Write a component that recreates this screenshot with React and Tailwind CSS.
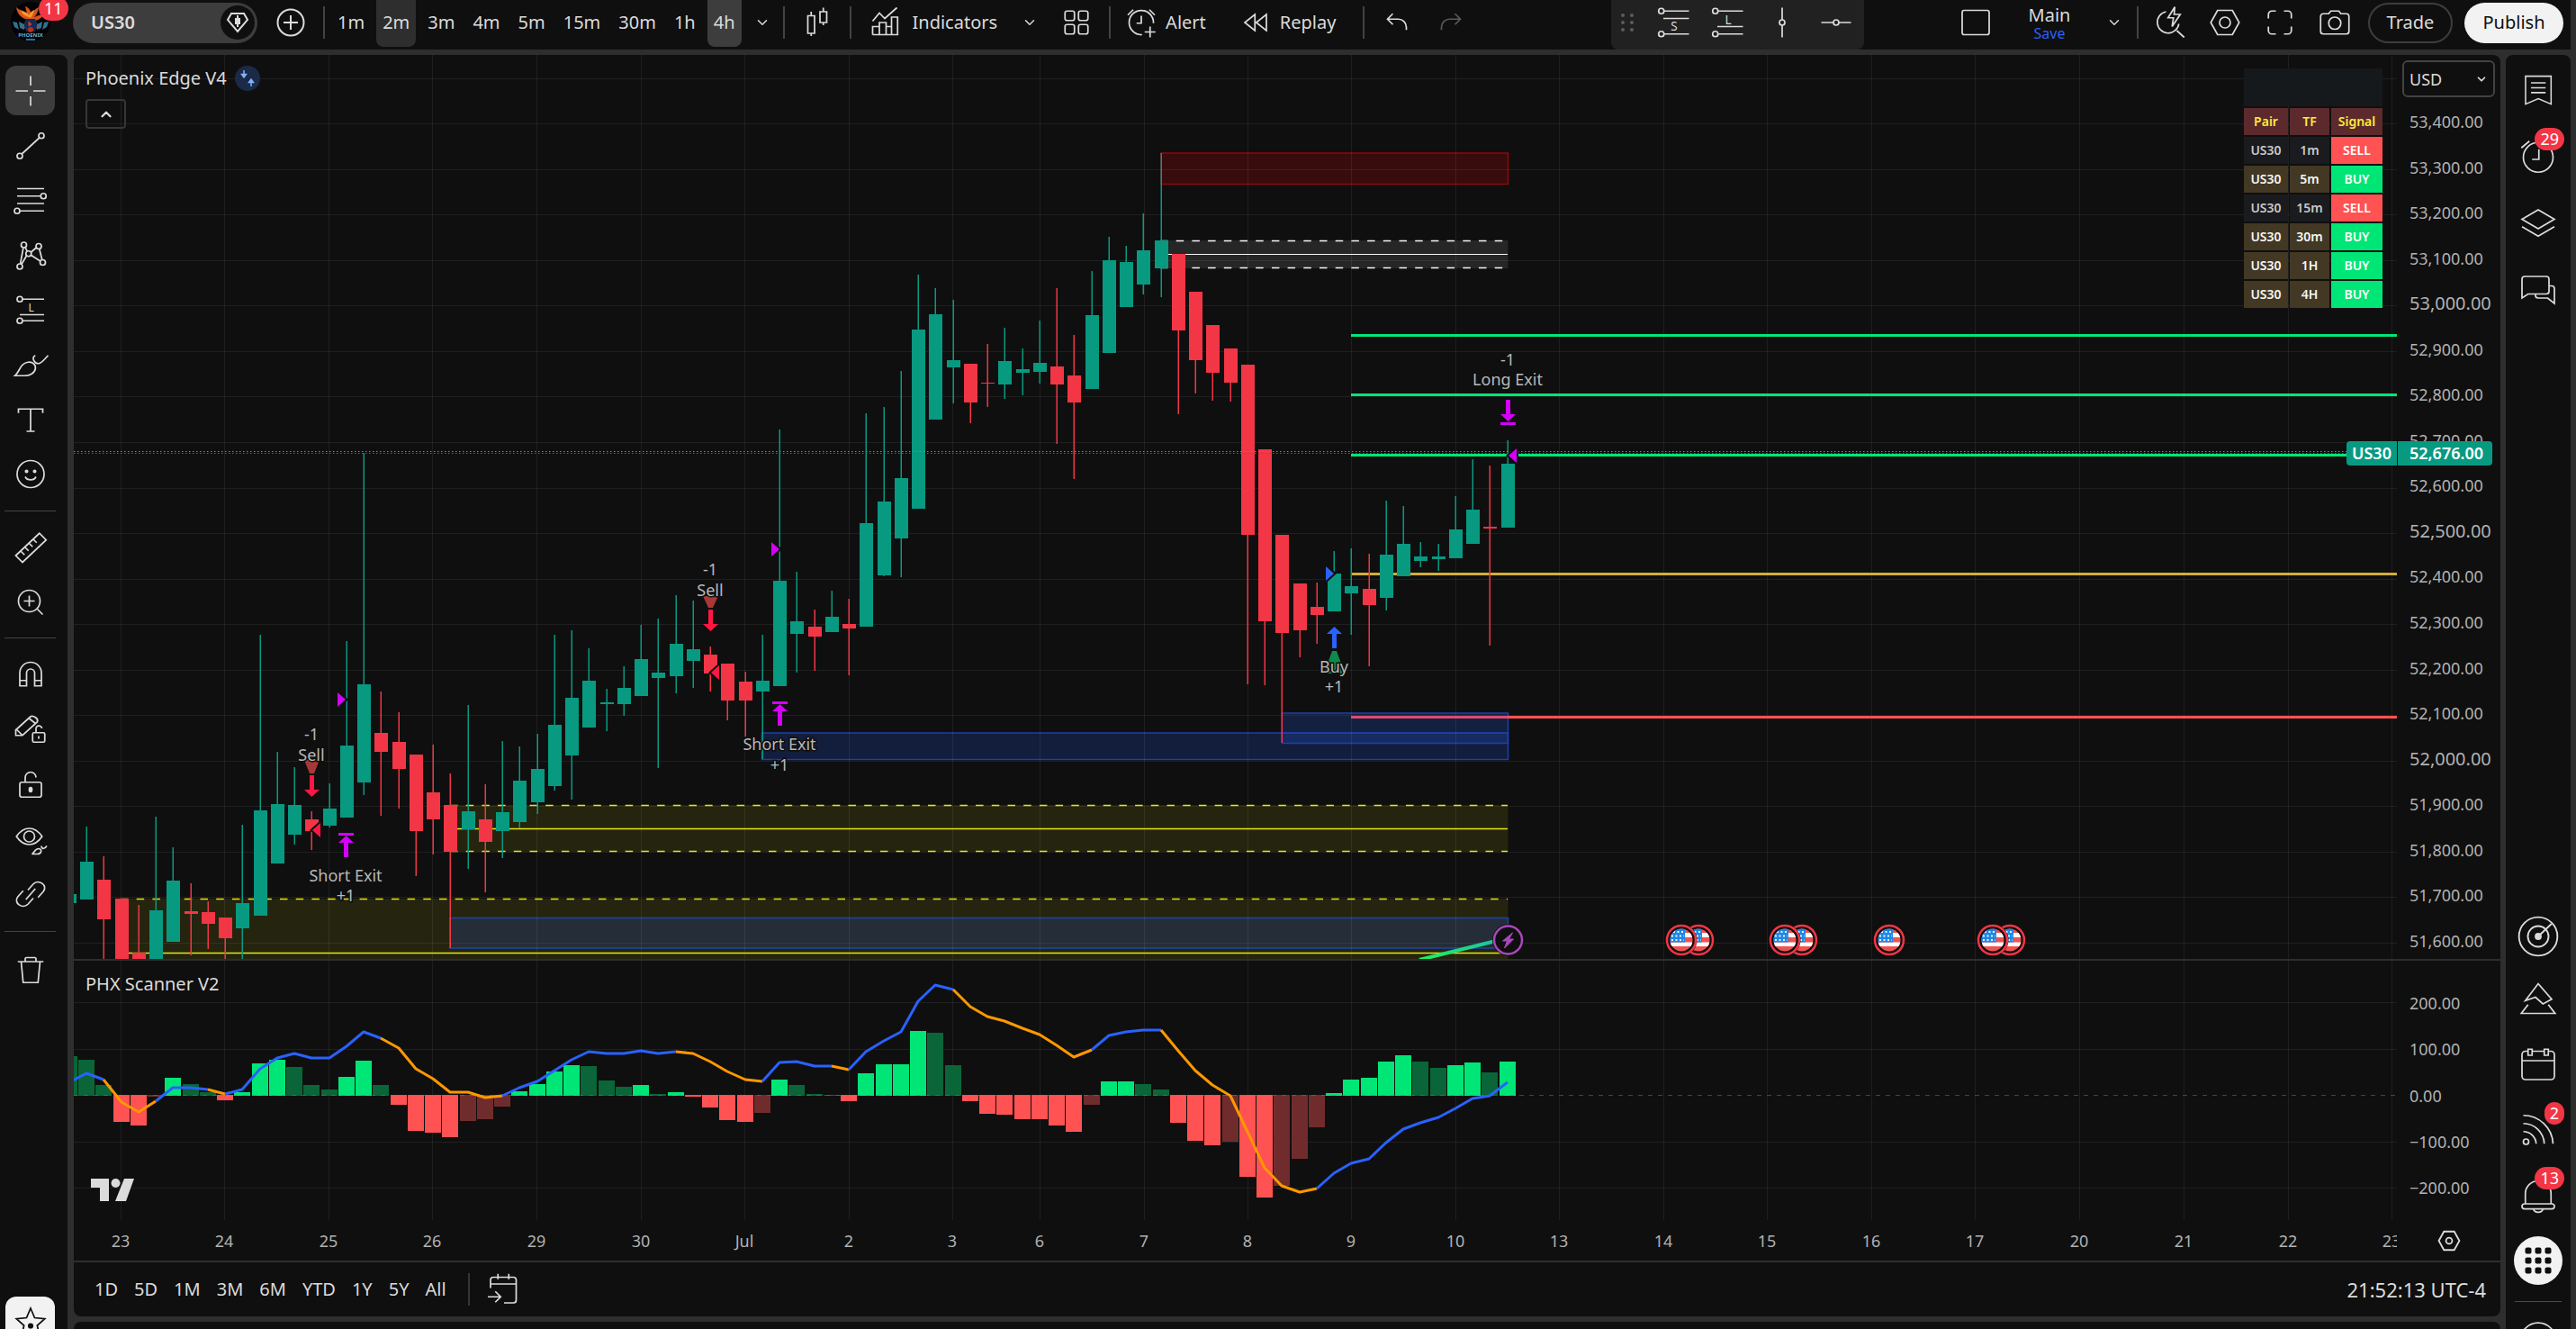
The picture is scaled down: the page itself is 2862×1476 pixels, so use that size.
import { ChevronDown } from "lucide-react";

// chart geometry, in pixels of the chart's own viewBox
const LEFT = 82;
const RIGHT = 2663;
const barX = (i) => 134.5 + 19.253 * i;
const priceY = (price) => 1047 - (price - 51600) * 0.5055;

// [direction, high, body top, body bottom, low], first bar has index -3
const CANDLES = [
  ["u", 993, 993, 1003, 1003], ["u", 918, 957, 999, 999], ["d", 951, 977, 1021, 1070],
  ["d", 998, 998, 1070, 1070], ["d", 1005, 1058, 1070, 1070], ["u", 907, 1011, 1070, 1070],
  ["u", 941, 978, 1046, 1046], ["d", 981, 1012, 1015, 1061], ["d", 1001, 1013, 1026, 1054],
  ["d", 1019, 1019, 1042, 1070], ["u", 916, 1003, 1031, 1070], ["u", 705, 900, 1017, 1017],
  ["u", 835, 893, 959, 959], ["u", 852, 894, 927, 938], ["d", 901, 910, 923, 944],
  ["u", 870, 898, 917, 919], ["u", 712, 828, 908, 908], ["u", 503, 760, 869, 883],
  ["d", 768, 814, 835, 906], ["d", 791, 824, 854, 898], ["d", 838, 838, 923, 973],
  ["d", 827, 880, 910, 949], ["d", 859, 894, 946, 1053], ["u", 783, 901, 921, 965],
  ["d", 871, 910, 935, 991], ["u", 823, 902, 923, 953], ["u", 829, 867, 913, 920],
  ["u", 815, 854, 891, 904], ["u", 705, 805, 873, 878], ["u", 700, 775, 839, 888],
  ["u", 720, 756, 808, 808], ["u", 765, 780, 782, 812], ["u", 740, 764, 782, 795],
  ["u", 694, 732, 773, 773], ["u", 687, 747, 753, 853], ["u", 661, 715, 751, 770],
  ["u", 667, 721, 734, 764], ["d", 718, 727, 748, 768], ["d", 737, 737, 778, 800],
  ["d", 746, 757, 778, 818], ["u", 705, 756, 768, 843], ["u", 477, 645, 762, 762],
  ["u", 635, 690, 704, 747], ["d", 677, 696, 707, 745], ["u", 656, 685, 702, 702],
  ["d", 665, 693, 698, 750], ["u", 459, 581, 696, 696], ["u", 452, 557, 639, 640],
  ["u", 412, 531, 598, 641], ["u", 305, 366, 565, 565], ["u", 320, 349, 466, 466],
  ["u", 333, 400, 408, 448], ["d", 404, 404, 447, 470], ["d", 382, 425, 426, 452],
  ["u", 364, 401, 427, 443], ["u", 387, 410, 414, 439], ["u", 356, 403, 413, 426],
  ["d", 320, 407, 427, 493], ["d", 372, 417, 447, 532], ["u", 301, 350, 432, 432],
  ["u", 263, 289, 392, 392], ["u", 273, 291, 341, 341], ["u", 237, 278, 316, 327],
  ["u", 170, 267, 298, 330], ["d", 282, 282, 367, 460], ["d", 324, 324, 400, 437],
  ["d", 361, 361, 414, 445], ["d", 387, 387, 425, 446], ["d", 405, 405, 594, 760],
  ["d", 499, 499, 690, 761], ["d", 594, 594, 703, 825], ["d", 648, 648, 700, 730],
  ["d", 647, 674, 683, 715], ["u", 612, 637, 679, 679], ["u", 609, 651, 659, 705],
  ["d", 615, 654, 672, 740], ["u", 556, 616, 664, 678], ["u", 562, 604, 640, 640],
  ["u", 602, 618, 623, 630], ["u", 604, 618, 621, 634], ["u", 551, 588, 620, 620],
  ["u", 510, 566, 604, 604], ["d", 517, 585, 587, 717], ["u", 489, 515, 586, 586],
];

const HISTOGRAM = [
  44, 40, 12, -30, -34, -2, 20, 13, 4, -6, 4, 36, 40, 32, 12, 7, 21, 39, 12, -11, -40, -42, -47, -29,
  -27, -13, 5, 13, 27, 34, 33, 17, 10, 12, 2, 4, -2, -14, -28, -30, -20, 18, 12, 2, 1, -7, 25, 35, 35,
  72, 70, 34, -7, -21, -22, -27, -27, -34, -41, -11, 16, 16, 13, 7, -31, -51, -56, -52, -91, -114,
  -101, -71, -36, 3, 18, 20, 38, 45, 38, 31, 34, 37, 26, 38,
];

const SCAN_LINE = [
  1202, 1192, 1199, 1224, 1235, 1223, 1208, 1208, 1210, 1215, 1210, 1187, 1175, 1170, 1175, 1175, 1162,
  1146, 1153, 1164, 1187, 1198, 1213, 1213, 1219, 1217, 1208, 1201, 1189, 1177, 1168, 1170, 1170, 1167,
  1170, 1168, 1170, 1179, 1190, 1199, 1201, 1180, 1179, 1184, 1184, 1188, 1168, 1156, 1146, 1112, 1094,
  1099, 1118, 1129, 1134, 1142, 1149, 1161, 1174, 1166, 1150, 1146, 1144, 1144, 1167, 1189, 1205, 1217,
  1257, 1297, 1317, 1324, 1320, 1303, 1292, 1287, 1269, 1254, 1247, 1241, 1231, 1220, 1217, 1202,
];

// runs of the scanner line, by bar index
const SCAN_RUNS = [
  [-3, -1, "b"], [-1, 2, "o"], [2, 5, "b"], [5, 6, "o"], [6, 15, "b"], [15, 22, "o"], [22, 32, "b"],
  [32, 37, "o"], [37, 41, "b"], [41, 42, "o"], [42, 48, "b"], [48, 56, "o"], [56, 60, "b"], [60, 69, "o"],
  [69, 80, "b"],
];

const DAYS = [
  ["23", 134], ["24", 249], ["25", 365], ["26", 480], ["29", 596], ["30", 712], ["Jul", 827], ["2", 943],
  ["3", 1058], ["6", 1155], ["7", 1271], ["8", 1386], ["9", 1501], ["10", 1617], ["13", 1732], ["14", 1848],
  ["15", 1963], ["16", 2079], ["17", 2194], ["20", 2310], ["21", 2426], ["22", 2542], ["23", 2657],
];

const PRICES = Array.from({ length: 19 }, (_, i) => 53400 - i * 100);

const SIGNALS = [
  ["1m", "SELL"], ["5m", "BUY"], ["15m", "SELL"], ["30m", "BUY"], ["1H", "BUY"], ["4H", "BUY"],
];

const INTERVALS = ["1m", "2m", "3m", "4m", "5m", "15m", "30m", "1h", "4h"];
const RANGES = ["1D", "5D", "1M", "3M", "6M", "YTD", "1Y", "5Y", "All"];

function Icon({ children, className = "w-[42px] h-[42px]" }) {
  return (
    <svg viewBox="0 0 28 28" className={`${className} shrink-0`} fill="none" stroke="currentColor" strokeWidth="1.15" aria-hidden="true">
      {children}
    </svg>
  );
}

/* ---------- top bar ---------- */

function Divider() {
  return <span className="w-[2px] h-[36px] bg-[#434343] shrink-0 mb-[6px]" />;
}

function TopButton({ label, className = "", children }) {
  return (
    <button aria-label={label} className={`h-[49px] flex items-center justify-center shrink-0 ${className}`}>
      {children}
    </button>
  );
}

function Avatar() {
  return (
    <div className="relative w-[44px] h-[55px] shrink-0">
      <svg viewBox="0 0 44 44" className="w-[44px] h-[44px] mt-[2px]" aria-label="Account">
        <circle cx="22" cy="22" r="22" fill="#020204" />
        <path d="M19 20C11 18 7 13 6 6c4 4 8 3 12 7l-2-8c5 2 6 5 7 9 2-4 4-6 8-8-1 5-2 8-5 11 5-2 8-3 10-2-3 4-7 6-12 7z" fill="#d8541d" />
        <path d="M20 17c-4-1-7-3-9-7 4 1 8 2 9 5 2-3 3-5 6-6-1 4-2 6-4 9z" fill="#f59a2f" />
        <path d="M17 19h10l3 6-3 8H17l-3-8z" fill="#172a52" />
        <path d="M2 22l5 1 2 8-5-3zM42 22l-5 1-2 8 5-3zM9 22l6 3v6l-5-2zM35 22l-6 3v6l5-2z" fill="#2c7391" />
        <path d="M20 22l3 3-3 2zM13 27l3 2M31 27l-3 2" fill="#c1402a" stroke="#c1402a" />
        <circle cx="22" cy="31" r="3" fill="#b5301d" />
        <text x="22" y="39" textAnchor="middle" fontSize="6" fontWeight="700" fill="#6fb1c9">PHOENIX</text>
        <path d="M17 42h10" stroke="#2b6fa8" strokeWidth="2" />
      </svg>
      <span className="absolute -top-1 left-[31px] h-[27px] px-[6px] rounded-full bg-[#f23645] text-white text-lg leading-[27px]">11</span>
    </div>
  );
}

function TopBar() {
  return (
    <header className="h-[55px] mr-[6px] bg-[#0f0f0f] flex items-center text-xl text-[#dbdbdb] overflow-hidden shrink-0">
      <div className="flex items-center pl-3 h-full">
        <Avatar />
        <button className="ml-[25px] mb-[5px] w-[205px] h-[45px] pl-5 pr-[3px] rounded-full bg-[#3d3d3d] flex items-center justify-between font-semibold">
          US30
          <span className="w-[38px] h-[38px] rounded-full bg-[#0f0f0f] flex items-center justify-center">
            <svg viewBox="0 0 26 24" className="w-[26px] h-[24px]" fill="none" stroke="#dbdbdb" strokeWidth="2">
              <path d="M6 2h14l4 7-11 13L2 9z" />
              <path d="M13 4v13" />
              <path d="M11 8h4v5h-4z" fill="#dbdbdb" />
            </svg>
          </span>
        </button>
        <TopButton label="Compare or add symbol" className="w-[73px] mb-[5px]">
          <svg viewBox="0 0 32 32" className="w-8 h-8" fill="none" stroke="currentColor" strokeWidth="2">
            <circle cx="16" cy="16" r="14.5" />
            <path d="M8 16h16M16 8v16" />
          </svg>
        </TopButton>
        <Divider />
        <div className="flex h-full ml-[7px] gap-[6px]">
          {INTERVALS.map((t) => (
            <button
              key={t}
              className={`h-[52px] pb-[3px] px-[7px] rounded-b-lg ${
                t === "2m" ? "bg-[#2e2e2e]" : t === "4h" ? "bg-[#3d3d3d]" : ""
              }`}
            >
              {t}
            </button>
          ))}
        </div>
        <TopButton label="More intervals" className="w-[46px] mb-[5px]">
          <ChevronDown size={18} strokeWidth={2} />
        </TopButton>
        <Divider />
        <TopButton label="Chart type" className="w-[72px] mb-[5px]">
          <Icon>
            <path d="M7 9h5v13H7zM9.500 6v3M16 6h5v8h-5zM18.500 3v3M9.500 22v2M18.500 14v2" />
          </Icon>
        </TopButton>
        <Divider />
        <TopButton label="Indicators" className="ml-[16px] mb-[5px] gap-[10px]">
          <Icon>
            <path d="M5 13l5-6 4 4 9-8M5 23v-6h5v6M10 23V14h5v9M15 23V17h4v6M19 23V10h4.500v13H5" />
          </Icon>
          <span>Indicators</span>
        </TopButton>
        <TopButton label="Favourite indicators" className="w-[72px] mb-[5px]">
          <ChevronDown size={18} strokeWidth={2} />
        </TopButton>
        <TopButton label="Indicator templates" className="w-[32px] mb-[5px]">
          <Icon>
            <rect x="5.500" y="5.500" width="7" height="7" rx="1.500" />
            <rect x="15.500" y="5.500" width="7" height="7" rx="1.500" />
            <rect x="5.500" y="15.500" width="7" height="7" rx="1.500" />
            <rect x="15.500" y="15.500" width="7" height="7" rx="1.500" />
          </Icon>
        </TopButton>
        <span className="w-5" />
        <Divider />
        <TopButton label="Alert" className="ml-[13px] mb-[5px] gap-[6px]">
          <Icon>
            <path d="M23 14.500a9 9 0 1 0-8.500 8.500M14 9v5.500h-3.500M4 8.500L8 4.500M24 8.500l-4-4M20.500 17v8M16.500 21h8" />
          </Icon>
          <span>Alert</span>
        </TopButton>
        <TopButton label="Replay" className="ml-[34px] mb-[5px] gap-[6px]">
          <Icon>
            <path d="M13.500 8v12L6 14zM22 8v12l-7.500-6z" />
          </Icon>
          <span>Replay</span>
        </TopButton>
        <span className="w-[30px]" />
        <Divider />
        <TopButton label="Undo" className="w-[72px] mb-[5px]">
          <Icon>
            <path d="M11 7.500L7 11.500l4 4M7 11.500h8a6 6 0 0 1 6 6v2" />
          </Icon>
        </TopButton>
        <TopButton label="Redo" className="w-[48px] mb-[5px] text-[#5a5a5a]">
          <Icon>
            <path d="M17 7.500l4 4-4 4M21 11.500h-8a6 6 0 0 0-6 6v2" />
          </Icon>
        </TopButton>
      </div>

      {/* favourite drawing tools */}
      <div className="ml-[154px] h-full w-[281px] bg-[#212121] rounded-b-lg flex items-center pl-[10px] shrink-0">
        <svg viewBox="0 0 16 24" className="w-4 h-6 mb-[5px]" fill="#5c5c5c">
          {[4, 12, 20].map((y) => (
            <g key={y}>
              <circle cx="3" cy={y} r="2" />
              <circle cx="13" cy={y} r="2" />
            </g>
          ))}
        </svg>
        <TopButton label="Short position" className="w-[60px] ml-[14px] mb-[5px]">
          <Icon>
            <circle cx="4.500" cy="5.500" r="2" />
            <circle cx="4.500" cy="22.500" r="2" />
            <path d="M6.500 5.500H25M6 11h19M6.500 22.500H25" />
            <text x="14" y="20" fontSize="9" textAnchor="middle" fill="currentColor" stroke="none">S</text>
          </Icon>
        </TopButton>
        <TopButton label="Long position" className="w-[60px] mb-[5px]">
          <Icon>
            <circle cx="4.500" cy="5.500" r="2" />
            <circle cx="4.500" cy="22.500" r="2" />
            <path d="M6.500 5.500H25M6 17h19M6.500 22.500H25" />
            <text x="14" y="15" fontSize="9" textAnchor="middle" fill="currentColor" stroke="none">L</text>
          </Icon>
        </TopButton>
        <TopButton label="Vertical line" className="w-[60px] mb-[5px]">
          <Icon>
            <circle cx="14" cy="14" r="2" />
            <path d="M14 3v9M14 16v9" />
          </Icon>
        </TopButton>
        <TopButton label="Horizontal line" className="w-[60px] mb-[5px]">
          <Icon>
            <circle cx="14" cy="14" r="2" />
            <path d="M3 14h9M16 14h9" />
          </Icon>
        </TopButton>
      </div>

      <div className="ml-auto mb-[5px] flex items-center pr-2">
        <TopButton label="Layout setup" className="w-[60px]">
          <Icon>
            <rect x="4" y="5" width="20" height="18" rx="1.500" />
          </Icon>
        </TopButton>
        <button className="ml-[5px] w-[94px] flex flex-col items-center">
          <span className="leading-6">Main</span>
          <span className="text-base leading-4 text-[#2962ff]">Save</span>
        </button>
        <TopButton label="Manage layouts" className="w-[50px]">
          <ChevronDown size={18} strokeWidth={2} />
        </TopButton>
        <span className="w-[2px] h-[36px] bg-[#434343] mr-[14px]" />
        <TopButton label="Quick search" className="w-[42px]">
          <Icon>
            <path d="M11 6a8 8 0 1 0 9.500 9M19 20l5.500 5M17.500 2.500l-5 8h4l-1 6.500 6-9H17z" />
          </Icon>
        </TopButton>
        <TopButton label="Settings" className="w-[42px] ml-[19px]">
          <Icon>
            <path d="M8.500 5h11L24.500 14l-5 9h-11L3.500 14z" />
            <circle cx="14" cy="14" r="4" />
          </Icon>
        </TopButton>
        <TopButton label="Fullscreen" className="w-[42px] ml-[19px]">
          <Icon>
            <path d="M5.500 11V8a2.500 2.500 0 0 1 2.500-2.500h3M17 5.500h3A2.500 2.500 0 0 1 22.500 8v3M22.500 17v3a2.500 2.500 0 0 1-2.500 2.500h-3M11 22.500H8A2.500 2.500 0 0 1 5.500 20v-3" />
          </Icon>
        </TopButton>
        <TopButton label="Snapshot" className="w-[42px] ml-[19px]">
          <Icon>
            <path d="M9.500 7.500L11 5.500h6l1.500 2h4A2 2 0 0 1 24.500 9.500v11a2 2 0 0 1-2 2h-17a2 2 0 0 1-2-2v-11a2 2 0 0 1 2-2z" />
            <circle cx="14" cy="14.500" r="4.500" />
          </Icon>
        </TopButton>
        <button className="ml-4 h-[45px] w-[94px] rounded-full border-2 border-[#3d3d3d]">Trade</button>
        <button className="ml-[13px] h-[45px] w-[110px] rounded-full bg-[#f2f2f2] text-[#0f0f0f]">Publish</button>
      </div>
    </header>
  );
}

/* ---------- drawing tools on the left ---------- */

const DRAW_TOOLS = [
  ["Cross", <path d="M14 3v7M14 18v7M3 14h9M16 14h9" />],
  ["Trend line", <><circle cx="6" cy="21.500" r="2" /><circle cx="22" cy="6.500" r="2" /><path d="M7.500 20L20.500 8" /></>],
  ["Fib retracement", <><path d="M4 5h20M4 10.500h17.500M4 16h20M6 21.500h18" /><circle cx="23.500" cy="10.500" r="2" /><circle cx="4" cy="21.500" r="2" /></>],
  ["Patterns", <><circle cx="9" cy="6" r="2" /><circle cx="20" cy="7" r="2" /><circle cx="6" cy="22" r="2" /><circle cx="23" cy="19" r="2" /><circle cx="12.500" cy="12.500" r="2" /><path d="M8.600 8L6.400 20M10 7.800l1.500 3M14.200 11.500l4-3.500M20.500 9l2 8M14.200 13.500l7 4.500M11 14l-3.800 6.500" /></>],
  ["Forecasting", <><circle cx="6" cy="5.500" r="2" /><circle cx="6" cy="21.500" r="2" /><path d="M8 5.500h16M6 17h18M8 21.500h16" /><text x="14.500" y="14.500" fontSize="8" textAnchor="middle" fill="currentColor" stroke="none">L</text></>],
  ["Brush", <path d="M2.500 21.500C6 18.500 6 12.500 12 11.500c4-.5 6 2 5.500 5s-4 5-8 5zM17.500 6.500c-3 1.500-1 6 2.500 6 2.500-.5 4-3 7-6" />],
  ["Text", <path d="M5 8.500V5.500h18v3M14 5.500v16.500M11 22h6" />],
  ["Icons", <><circle cx="14" cy="13" r="10" /><path d="M10 15c1.500 3 6.500 3 8 0" /><circle cx="11" cy="11" r=".8" fill="currentColor" /><circle cx="17" cy="11" r=".8" fill="currentColor" /></>],
];

const LEFT_TOOLS = [
  ["Measure", <path d="M3 20L20.500 3.500l5 5L8 25zM7 17l2.500 2.500M10 14l2.500 2.500M13 11l2.500 2.500M16 8l2.500 2.500" />],
  ["Zoom in", <><circle cx="13" cy="13" r="8" /><path d="M9 13h8M13 9v8M19 19l4 4" /></>],
];

const LOCK_TOOLS = [
  ["Magnet", <path d="M6 22.500V13a8 8 0 0 1 16 0v9.500h-5V13a3 3 0 0 0-6 0v9.500zM6 18.500h5M17 18.500h5" />],
  ["Stay in drawing mode", <><path d="M3 18.500v-4L14 4.500c2-1 6 1.500 5 4L8 18.500zM13 6l5 4M4 14.500l4 4" /><rect x="15.500" y="16.500" width="9" height="7" rx="1" /><path d="M18 16v-2a2.200 2.200 0 0 1 4.400-.8M20 19v2" /></>],
  ["Lock all drawings", <><rect x="6" y="12.500" width="16" height="11" rx="1.500" /><path d="M10 12.500V9a4 4 0 0 1 8 0" /><ellipse cx="14" cy="18" rx="1" ry="1.600" fill="currentColor" /></>],
  ["Hide all drawings", <><path d="M3.500 12C9 4 17 4 22.500 12 17 20 9 20 3.500 12z" /><circle cx="13" cy="12" r="4" /><path d="M15 25c2-1 2-4 5-4 3 .5 2 4-1 4zM22 19c0 2 2 3 4 0" /></>],
  ["Sync drawings", <path d="M12 11l4-4.500c4-4 11 1 7.500 5.500l-4 4.500M16 17l-4 4.500c-4 4-11-1-7.500-5.500l4-4.500M10.500 18l7-8" />],
];

function ToolGroup({ tools }) {
  return (
    <div className="flex flex-col gap-[6px] px-[6px]">
      {tools.map(([name, art]) => (
        <button
          key={name}
          aria-label={name}
          className={`w-[55px] h-[55px] rounded-xl flex items-center justify-center ${name === "Cross" ? "bg-[#3d3d3d]" : ""}`}
        >
          <Icon>{art}</Icon>
        </button>
      ))}
    </div>
  );
}

function LeftBar() {
  return (
    <nav className="w-[75px] bg-[#0f0f0f] rounded-tr-lg pt-3 text-[#dbdbdb] flex flex-col overflow-hidden shrink-0">
      <ToolGroup tools={DRAW_TOOLS} />
      <hr className="w-[57px] ml-[5px] my-3 border-[#434343] shrink-0" />
      <ToolGroup tools={LEFT_TOOLS} />
      <hr className="w-[57px] ml-[5px] my-3 border-[#434343] shrink-0" />
      <ToolGroup tools={LOCK_TOOLS} />
      <hr className="w-[57px] ml-[5px] my-[14px] border-[#434343] shrink-0" />
      <ToolGroup
        tools={[["Remove objects", <path d="M4.500 8h19M7 8l1.500 15.500h11L21 8M10 8V6a1 1 0 0 1 1-1h6a1 1 0 0 1 1 1v2" />]]}
      />
      <div className="mt-auto h-[36px] px-[6px] overflow-hidden shrink-0">
        <button aria-label="Favourites" className="w-[55px] h-[55px] rounded-xl bg-[#f2f2f2] text-[#0f0f0f] flex items-center justify-center">
          <Icon>
            <path d="M14 4l3 7 7.500.7-5.600 5 1.600 7.300L14 20l-6.500 4 1.600-7.300-5.600-5L11 11z" />
            <circle cx="14" cy="17" r="1.500" fill="currentColor" />
          </Icon>
        </button>
      </div>
    </nav>
  );
}

/* ---------- widgets on the right ---------- */

function SideButton({ label, badge, className = "", children }) {
  return (
    <button aria-label={label} className={`relative w-[54px] h-[54px] shrink-0 flex items-center justify-center ${className}`}>
      {children}
      {badge && (
        <span className="absolute -top-[5px] -right-[2px] h-[25px] px-[6px] rounded-full bg-[#f23645] text-white text-lg leading-[25px]">
          {badge}
        </span>
      )}
    </button>
  );
}

function RightBar() {
  return (
    <aside className="w-[72px] bg-[#0f0f0f] rounded-t-lg pt-[12px] text-[#dbdbdb] flex flex-col items-center overflow-hidden shrink-0">
      <div className="flex flex-col gap-5">
        <SideButton label="Watchlist">
          <Icon><path d="M3.500 2.500h21v23L14 21 3.500 25.500zM8 8h12M8 12h12M8 16h12" transform="translate(1.500 1.500) scale(.9)" /></Icon>
        </SideButton>
        <SideButton label="Alerts" badge="29">
          <Icon><circle cx="14" cy="14.500" r="11" /><path d="M14.500 8.500V16H9.500M1.500 7.500l6-5" /></Icon>
        </SideButton>
        <SideButton label="Object tree">
          <Icon><path d="M14 4l12 7-12 7L2 11zM2 16.500l12 7 12-7" /></Icon>
        </SideButton>
        <SideButton label="Chats">
          <Icon><path d="M2 20V6a2 2 0 0 1 2-2h16a2 2 0 0 1 2 2v9a2 2 0 0 1-2 2H6.500zM22 11h2a2 2 0 0 1 2 2v11l-5-4h-7a2 2 0 0 1-2-2v-1" /></Icon>
        </SideButton>
      </div>
      <div className="mt-auto flex flex-col gap-[18px]">
        <SideButton label="Screener">
          <Icon className="w-[46px] h-[46px]"><circle cx="14" cy="14" r="13" /><circle cx="14" cy="14" r="7" /><circle cx="14" cy="14" r="1.800" fill="currentColor" /><path d="M14 14l9-8.500" /></Icon>
        </SideButton>
        <SideButton label="Pine">
          <Icon><path d="M14 1L24 12.500 17.500 16 12 11l-7.500 2.500zM6.500 16.500L1.500 23h25L21.500 16.500" /></Icon>
        </SideButton>
        <SideButton label="Calendar">
          <Icon><rect x="2" y="3" width="24" height="21" rx="2.500" /><path d="M2 10h24" /><path d="M6.500 1.500h3V6h-3zM18.500 1.500h3V6h-3z" fill="#0f0f0f" /></Icon>
        </SideButton>
        <SideButton label="News flow" badge="2">
          <Icon><circle cx="5" cy="22" r="2" /><path d="M3 14.500a9.500 9.500 0 0 1 9.500 9M3 8.500a15.500 15.500 0 0 1 15.500 15M3 2.500a22 22 0 0 1 22 21" /></Icon>
        </SideButton>
        <SideButton label="Notifications" badge="13">
          <Icon><path d="M4.500 20v-7.500a9.500 9.500 0 0 1 19 0V20M10.500 24c1 3 6 3 7 0" /><rect x="2" y="20" width="24" height="3.800" rx="1.900" /></Icon>
        </SideButton>
        <SideButton label="Products" className="rounded-full bg-[#f2f2f2]">
          <svg viewBox="0 0 30 30" className="w-[30px] h-[30px]" fill="#0f0f0f">
            {[0, 11, 22].map((y) => [0, 11, 22].map((x) => <rect key={`${x}-${y}`} x={x + 0.5} y={y + 0.5} width="7" height="7" rx="2" />))}
          </svg>
        </SideButton>
      </div>
      <hr className="w-[52px] mt-[18px] mb-[22px] border-[#4a4a4a] shrink-0" />
      <div className="h-[8px] overflow-hidden shrink-0">
        <Icon><circle cx="14" cy="14" r="13.200" /></Icon>
      </div>
    </aside>
  );
}

/* ---------- chart drawing ---------- */

function Label({ x, y, children }) {
  return (
    <text x={x} y={y + 7} textAnchor="middle" fontSize="18" fill="#b8b8b8" stroke="#0f0f0f" strokeWidth="3" paintOrder="stroke">
      {children}
    </text>
  );
}

function ArrowUp({ x, y, color, bar }) {
  return (
    <path fill={color} d={`${bar ? `M${x - 8.500} ${y - 3}h17v3h-17z` : ""}M${x} ${y}l8.500 8h-6v16h-5v-16h-6z`} />
  );
}

function ArrowDown({ x, y, color, bar }) {
  return (
    <path fill={color} d={`${bar ? `M${x - 8.500} ${y + 1}h17v3h-17z` : ""}M${x} ${y}l8.500-8h-6v-16h-5v16h-6z`} />
  );
}

// small wedge that marks the fill price, its tip at x, y
function Wedge({ x, y, dir, color }) {
  const back = dir === "right" ? -9 : 9;
  return <path d={`M${x} ${y}l${back}-8v16z`} fill={color} stroke="#0f0f0f" strokeWidth="4" paintOrder="stroke" />;
}

function Zone({ x, top, bottom, fill, stroke }) {
  return <rect x={x} y={top} width={1675.500 - x} height={bottom - top} fill={fill} stroke={stroke} strokeWidth={stroke ? 1.5 : 0} />;
}

function UsEvent({ x }) {
  return (
    <g transform={`translate(${x} 1044)`}>
      <circle r="17.500" fill="#0f0f0f" />
      <circle r="16" fill="#0f0f0f" stroke="#f23645" strokeWidth="2.500" />
      <g clipPath="url(#flag)">
        <rect x="-13" y="-13" width="26" height="26" fill="#ef5350" />
        <rect x="-13" y="-8" width="26" height="5" fill="#fff" />
        <rect x="-13" y="2.500" width="26" height="4.500" fill="#fff" />
        <rect x="-13" y="-13" width="17" height="15.500" fill="#1e88e5" />
        <path d="M-9 -9h12M-11 -4.500h14M-11 0h14" stroke="#e3f2fd" strokeWidth="2" strokeDasharray="2 2.500" />
      </g>
    </g>
  );
}

function PricePane() {
  return (
    <svg viewBox="82 61 2581 1004" className="block w-full h-auto" role="img" aria-label="US30 price chart">
      <defs>
        <clipPath id="flag"><circle r="12.500" /></clipPath>
        <linearGradient id="trend" x1="0" x2="1">
          <stop offset="0" stopColor="#1cf25f" />
          <stop offset="1" stopColor="#1fc49c" />
        </linearGradient>
      </defs>

      <Zone x={500} top={894} bottom={946} fill="#25240f" />
      <Zone x={134} top={998} bottom={1070} fill="#25240f" />
      <Zone x={1290} top={267} bottom={298} fill="#262626" />
      <Zone x={500} top={1019.500} bottom={1053} fill="#252d38" stroke="#1e46a8" />
      <Zone x={1290} top={170} bottom={204.500} fill="#380b0d" stroke="#8c0a0e" />
      <Zone x={846.500} top={814} bottom={843.500} fill="#131d3c" stroke="#1c40ac" />
      <Zone x={1424.500} top={792} bottom={825.500} fill="#2962ff33" stroke="#1c40ac" />

      <g stroke="#ffffff" strokeOpacity="0.07">
        {DAYS.map(([d, x]) => <path key={x} d={`M${x + 0.5} 61V1065`} />)}
        {[53500, ...PRICES].map((p) => <path key={p} d={`M${LEFT} ${Math.round(priceY(p)) + 0.5}H${RIGHT}`} />)}
      </g>

      <g strokeWidth="1.500">
        <g stroke="#e8e80c">
          <path d="M500 894.500H1675M500 945.500H1675M134 998.500H1675" strokeDasharray="8.500 9.200" />
          <path d="M500 920.500H1675M134 1058.500H1675" />
        </g>
        <g stroke="#f5f5f5">
          <path d="M1289 267.500H1670M1289 297.500H1670" strokeDasharray="8.500 9.200" />
          <path d="M1290 282.500H1675" strokeWidth="1" />
        </g>
      </g>

      <g strokeWidth="3">
        <path d="M1501 372.500H2663M1501 438.500H2663M1501 505.500H2663" stroke="#00e676" />
        <path d="M1501 637.500H2663" stroke="#d4af37" />
        <path d="M1675 796.500H2663" stroke="#ff5252" />
        <path d="M1501 796.500H1675" stroke="#d94c70" />
        <path d="M1577 1066L1662 1045" stroke="url(#trend)" strokeWidth="4" />
      </g>

      {CANDLES.map(([dir, high, top, bottom, low], n) => {
        const x = Math.round(barX(n - 3));
        return (
          <g key={n} fill={dir === "u" ? "#089981" : "#f23645"}>
            <rect x={x - 0.5} y={high} width="1.500" height={low - high} />
            <rect x={x - 7} y={top} width="15" height={bottom - top} />
          </g>
        );
      })}

      <path d={`M${LEFT} 501.500H${RIGHT}`} stroke="#e05a58" strokeDasharray="1.500 2.500" />
      <path d={`M${LEFT} 503.500H${RIGHT}`} stroke="#2962ff" strokeDasharray="1.500 2.500" />

      {/* sells */}
      <path d="M338 844h17l-6 15h-5zM781 662h17l-6 13h-5z" fill="#a83838" />
      <ArrowDown x={346.500} y={885} color="#ff1744" />
      <ArrowDown x={789.500} y={701} color="#ff1744" />
      <Wedge x={347} y={922} dir="left" color="#ff1744" />
      <Wedge x={790} y={747} dir="left" color="#ff1744" />
      <Label x={346} y={815}>-1</Label>
      <Label x={346} y={838}>Sell</Label>
      <Label x={789} y={632}>-1</Label>
      <Label x={789} y={655}>Sell</Label>

      {/* exits */}
      <ArrowUp x={384.500} y={928} color="#d500f9" bar />
      <ArrowUp x={866.500} y={782} color="#d500f9" bar />
      <ArrowDown x={1675.500} y={468} color="#d500f9" bar />
      <Wedge x={384} y={777} dir="right" color="#d500f9" />
      <Wedge x={866} y={610} dir="right" color="#d500f9" />
      <Wedge x={1676} y={506} dir="left" color="#d500f9" />
      <Label x={384} y={972}>Short Exit</Label>
      <Label x={384} y={994}>+1</Label>
      <Label x={866} y={826}>Short Exit</Label>
      <Label x={866} y={849}>+1</Label>
      <Label x={1675} y={399}>-1</Label>
      <Label x={1675} y={421}>Long Exit</Label>

      {/* buy */}
      <Wedge x={1482} y={637} dir="right" color="#2962ff" />
      <ArrowUp x={1482.500} y={696} color="#2962ff" />
      <path d="M1480 723h5l9 25h-23z" fill="#0f8a4c" />
      <Label x={1482} y={740}>Buy</Label>
      <Label x={1482} y={762}>+1</Label>

      {[1887, 1868, 2002, 1983, 2099, 2233, 2214].map((x) => <UsEvent key={x} x={x} />)}
      <g transform="translate(1675.500 1044)">
        <circle r="17.500" fill="#0f0f0f" />
        <circle r="15.500" fill="#0f0f0f" stroke="#ab47bc" strokeWidth="2.500" />
        <path d="M5-8L-6 1h5l-3 8L6-1H1z" fill="#ab47bc" stroke="#ab47bc" />
      </g>
    </svg>
  );
}

function ScannerPane() {
  let prev = 50;
  let bright = false;
  const bars = HISTOGRAM.map((v) => {
    if (v * prev < 0 || Math.abs(v) > Math.abs(prev)) bright = true;
    else if (Math.abs(v) < Math.abs(prev)) bright = false;
    prev = v;
    if (v > 0) return [v, bright ? "#00e676" : "#0a6638"];
    return [v, bright ? "#ff5252" : "#702c2c"];
  });
  bars[5][1] = "#702c2c";

  return (
    <svg viewBox="82 1067 2581 288" className="block w-full h-auto" role="img" aria-label="PHX Scanner V2">
      <g stroke="#ffffff" strokeOpacity="0.07">
        {DAYS.map(([d, x]) => <path key={x} d={`M${x + 0.5} 1067V1355`} />)}
        <path d="M82 1113.500H2663M82 1165.500H2663M82 1268.500H2663M82 1319.500H2663" />
      </g>
      {bars.map(([v, color], n) => (
        <rect key={n} x={Math.round(barX(n - 3)) - 9} y={v > 0 ? 1217 - v : 1216} width="18" height={Math.abs(v)} fill={color} />
      ))}
      <path d="M82 1216.500H2663" stroke="#787878" strokeOpacity="0.5" strokeDasharray="5 6" />
      {SCAN_RUNS.map(([from, to, c]) => (
        <polyline
          key={from}
          points={SCAN_LINE.slice(from + 3, to + 4).map((y, k) => `${Math.round(barX(from + k))},${y}`).join(" ")}
          fill="none"
          stroke={c === "b" ? "#2962ff" : "#ff9800"}
          strokeWidth="3"
          strokeLinejoin="round"
        />
      ))}
      <path d="M101 1309h20v25h-10v-15h-10zM138 1309h11l-9 25h-12z" fill="#dbdbdb" />
      <circle cx="128.500" cy="1314" r="5" fill="#dbdbdb" />
    </svg>
  );
}

function SignalTable() {
  return (
    <table className="absolute top-[13px] right-[14px] border-separate border-spacing-x-[2px] border-spacing-y-[2px] text-sm font-semibold text-center leading-5">
      <thead>
        <tr className="h-[42px]">
          <td colSpan={3} className="bg-[#16191b]"></td>
        </tr>
        <tr className="h-[30px] bg-[#5c2a2c] text-[#ffeb3b]">
          <th className="w-[49px] p-0 font-semibold">Pair</th>
          <th className="w-[44px] p-0 font-semibold">TF</th>
          <th className="w-[57px] p-0 font-semibold">Signal</th>
        </tr>
      </thead>
      <tbody>
        {SIGNALS.map(([tf, side]) => (
          <tr key={tf} className={`h-[30px] ${side === "BUY" ? "text-[#f5f5f5]" : "text-[#c8c8c8]"}`}>
            <td className={`p-0 ${side === "BUY" ? "bg-[#423824]" : "bg-[#1a1b1f]"}`}>US30</td>
            <td className={`p-0 ${side === "BUY" ? "bg-[#423824]" : "bg-[#1a1b1f]"}`}>{tf}</td>
            <td className={`p-0 text-white ${side === "BUY" ? "bg-[#00e676]" : "bg-[#ff5252]"}`}>{side}</td>
          </tr>
        ))}
      </tbody>
    </table>
  );
}

function ChartPanel() {
  return (
    <section className="bg-[#0f0f0f] rounded-lg overflow-hidden text-lg text-[#b2b2b2]">
      <div className="relative flex border-b-2 border-[#2e2e2e]">
        <div className="relative flex-1 min-w-0">
          <PricePane />
          <div className="absolute top-3 left-[13px]">
            <h1 className="flex items-center gap-[9px] text-xl text-[#dbdbdb]">
              Phoenix Edge V4
              <span className="w-7 h-7 rounded-full bg-[#1b2a47] flex items-center justify-center">
                <svg viewBox="0 0 20 20" className="w-5 h-5" fill="#82b1ff" stroke="#82b1ff" strokeWidth="1.500">
                  <path d="M6 1v6M3.500 5.500h5L6 9zM14 19v-6M11.500 14.500h5L14 11z" />
                </svg>
              </span>
            </h1>
            <button aria-label="Collapse legend" className="mt-[9px] w-[45px] h-[33px] rounded border-2 border-[#363636] flex items-center justify-center">
              <ChevronDown size={18} strokeWidth={3} className="rotate-180 text-[#dbdbdb]" />
            </button>
          </div>
          <SignalTable />
          <span className="absolute top-[429px] right-0 w-[56px] h-[27px] rounded-l bg-[#089981] text-white font-semibold text-center leading-[27px]">US30</span>
        </div>
        <div className="relative w-[115px] shrink-0 flex flex-col justify-between pt-[64px] pb-[10px] pl-[14px]">
          {PRICES.map((p) => (
            <span key={p} className={`h-5 leading-5 ${p === 53000 || p === 52500 || p === 52000 ? "text-xl leading-5" : ""}`}>
              {p.toLocaleString("en-US")}.00
            </span>
          ))}
          <button className="absolute top-[6px] left-[6px] right-[6px] h-[41px] px-[6px] rounded-md border-2 border-[#434343] bg-[#0f0f0f] text-[#dbdbdb] flex items-center justify-between">
            USD
            <ChevronDown size={14} strokeWidth={3} />
          </button>
          <span className="absolute top-[429px] left-[1px] w-[105px] h-[27px] pl-[13px] rounded-r bg-[#089981] text-white font-semibold leading-[27px]">52,676.00</span>
        </div>
      </div>

      <div className="flex">
        <div className="relative flex-1 min-w-0">
          <ScannerPane />
          <h2 className="absolute top-3 left-[13px] text-xl text-[#dbdbdb]">PHX Scanner V2</h2>
        </div>
        <div className="w-[115px] shrink-0 flex flex-col justify-between pt-[37px] pb-[26px] pl-[14px]">
          {["200.00", "100.00", "0.00", "−100.00", "−200.00"].map((v) => (
            <span key={v} className="h-5 leading-5">{v}</span>
          ))}
        </div>
      </div>

      <div className="flex border-b-2 border-[#2e2e2e]">
        <svg viewBox="82 1355 2581 45" className="block flex-1 min-w-0 h-auto" fontSize="18" fill="#b2b2b2" textAnchor="middle">
          {DAYS.map(([d, x]) => <text key={x} x={x} y="1385">{d}</text>)}
        </svg>
        <button aria-label="Scale settings" className="w-[115px] shrink-0 flex items-center justify-center text-[#dbdbdb]">
          <Icon className="w-[32px] h-[32px]">
            <path d="M9 5h10l5 9-5 9H9l-5-9z" strokeWidth="1.600" />
            <circle cx="14" cy="14" r="3" strokeWidth="1.600" />
          </Icon>
        </button>
      </div>

      <div className="h-[60px] flex items-center pl-[14px] pr-4 text-xl text-[#dbdbdb]">
        {RANGES.map((r) => <button key={r} className="px-[9px]">{r}</button>)}
        <span className="ml-[15px] w-[2px] h-9 bg-[#363636]" />
        <button aria-label="Go to date" className="ml-[17px]">
          <Icon>
            <path d="M4 13V7a2 2 0 0 1 2-2h15a2 2 0 0 1 2 2v15a2 2 0 0 1-2 2h-7M4 10h19M9.500 2.500v4M17.500 2.500v4M2 19.500h9M7.500 15.500l4 4-4 4" />
          </Icon>
        </button>
        <button className="ml-auto text-[22px] tabular-nums">21:52:13 UTC-4</button>
      </div>
    </section>
  );
}

export default function App() {
  return (
    <div className="h-screen w-full bg-[#2e2e2e] flex flex-col overflow-hidden font-['Noto_Sans','Open_Sans',sans-serif]">
      <TopBar />
      <div className="flex-1 min-h-0 flex pt-[6px] pr-[6px]">
        <LeftBar />
        <main className="flex-1 min-w-0 ml-[7px] mr-[6px] flex flex-col gap-[6px]">
          <ChartPanel />
          <div className="flex-1 bg-[#0f0f0f] rounded-t-lg" />
        </main>
        <RightBar />
      </div>
    </div>
  );
}
